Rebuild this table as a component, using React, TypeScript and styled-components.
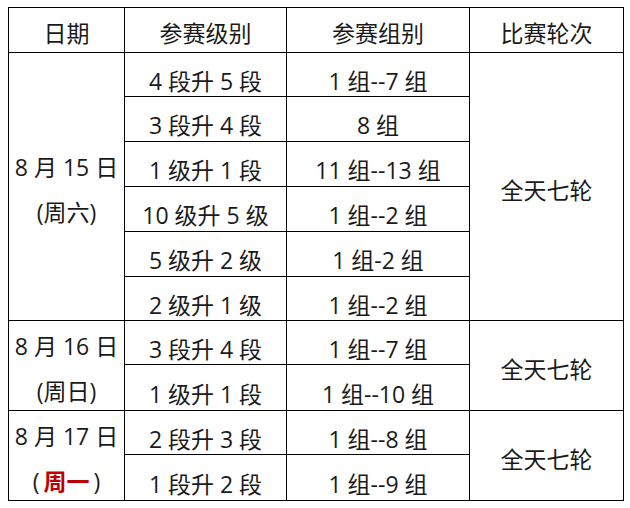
import React from 'react'
import styled, { createGlobalStyle } from 'styled-components'

const GlobalStyle = createGlobalStyle`
  html, body {
    margin: 0;
    padding: 0;
    background: #ffffff;
  }
  body {
    font-family: "Open Sans", "Noto Sans CJK SC", sans-serif;
    color: #1a1a1a;
  }
`

const Page = styled.div`
  width: 630px;
  height: 508px;
  padding: 7px 0 0 8px;
  box-sizing: border-box;
  overflow: hidden;
`

const Table = styled.table`
  border-collapse: collapse;
  table-layout: fixed;
  width: 615px;
  font-size: 23px;
`

const Row = styled.tr<{ $h: number }>`
  height: ${(p) => p.$h}px;
`

const Cell = styled.td<{ $shift?: number }>`
  border: 1px solid #000;
  padding: ${(p) => p.$shift ?? 12}px 0 0 0;
  text-align: center;
  vertical-align: middle;
  white-space: nowrap;
  line-height: 26px;
`

const HeadCell = styled(Cell).attrs({ as: 'th' })`
  font-weight: normal;
`

const DateLines = styled.div`
  line-height: 44.5px;
  padding-top: 3px;
  margin-bottom: -3px;
`

const Red = styled.span`
  color: #c00000;
  font-weight: bold;
  margin: 0 4px;
`

type Block = {
  date: string
  weekday: React.ReactNode
  rows: { level: string; group: string; h: number }[]
}

const BLOCKS: Block[] = [
  {
    date: '8 月 15 日',
    weekday: '(周六)',
    rows: [
      { level: '4 段升 5 段', group: '1 组--7 组', h: 44 },
      { level: '3 段升 4 段', group: '8 组', h: 45 },
      { level: '1 级升 1 段', group: '11 组--13 组', h: 45 },
      { level: '10 级升 5 级', group: '1 组--2 组', h: 45 },
      { level: '5 级升 2 级', group: '1 组-2 组', h: 45 },
      { level: '2 级升 1 级', group: '1 组--2 组', h: 44 },
    ],
  },
  {
    date: '8 月 16 日',
    weekday: '(周日)',
    rows: [
      { level: '3 段升 4 段', group: '1 组--7 组', h: 44 },
      { level: '1 级升 1 段', group: '1 组--10 组', h: 45 },
    ],
  },
  {
    date: '8 月 17 日',
    weekday: (
      <>
        (<Red>周一</Red>)
      </>
    ),
    rows: [
      { level: '2 段升 3 段', group: '1 组--8 组', h: 44 },
      { level: '1 段升 2 段', group: '1 组--9 组', h: 45 },
    ],
  },
]

export default function App() {
  return (
    <Page>
      <GlobalStyle />
      <Table>
        <colgroup>
          <col style={{ width: 116 }} />
          <col style={{ width: 162 }} />
          <col style={{ width: 183 }} />
          <col style={{ width: 154 }} />
        </colgroup>
        <tbody>
          <Row $h={45}>
            <HeadCell $shift={6}>日期</HeadCell>
            <HeadCell $shift={6}>参赛级别</HeadCell>
            <HeadCell $shift={6}>参赛组别</HeadCell>
            <HeadCell $shift={6}>比赛轮次</HeadCell>
          </Row>
          {BLOCKS.map((b) =>
            b.rows.map((r, i) => (
              <Row key={b.date + i} $h={r.h}>
                {i === 0 && (
                  <Cell rowSpan={b.rows.length} $shift={0}>
                    <DateLines>
                      {b.date}
                      <br />
                      {b.weekday}
                    </DateLines>
                  </Cell>
                )}
                <Cell>{r.level}</Cell>
                <Cell>{r.group}</Cell>
                {i === 0 && (
                  <Cell rowSpan={b.rows.length} $shift={6}>
                    全天七轮
                  </Cell>
                )}
              </Row>
            ))
          )}
        </tbody>
      </Table>
    </Page>
  )
}
